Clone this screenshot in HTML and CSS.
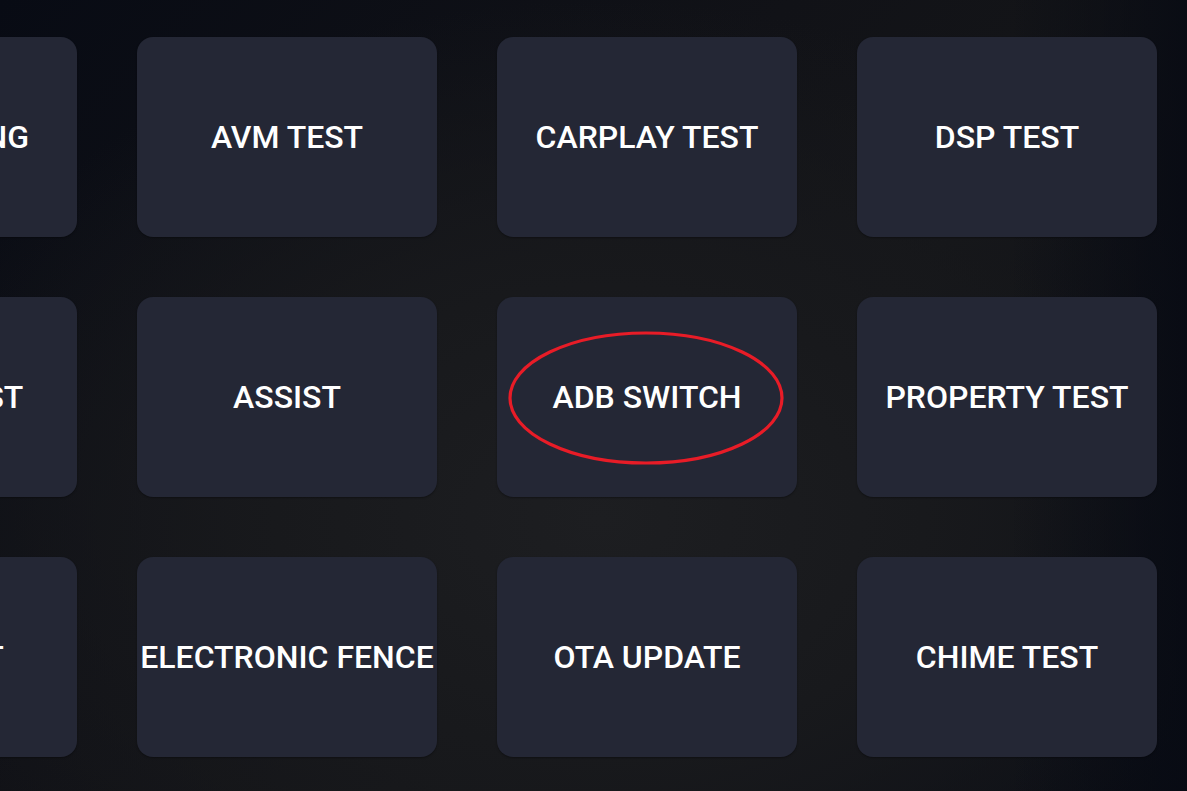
FILE: index.html
```html
<!DOCTYPE html>
<html lang="en">
<head>
<meta charset="utf-8">
<title>Test Menu</title>
<link rel="stylesheet" href="styles.css">
</head>
<body>
<main class="screen">
  <div class="grid">
    <button class="tile">ENGINEERING</button>
    <button class="tile">AVM TEST</button>
    <button class="tile">CARPLAY TEST</button>
    <button class="tile">DSP TEST</button>
    <button class="tile">POWER TEST</button>
    <button class="tile">ASSIST</button>
    <button class="tile tile-marked">ADB SWITCH
      <svg class="mark" viewBox="0 0 280 140" width="280" height="140" aria-hidden="true">
        <ellipse cx="139" cy="68" rx="136" ry="65" fill="none" stroke="#e81c27" stroke-width="3.2"/>
      </svg>
    </button>
    <button class="tile">PROPERTY TEST</button>
    <button class="tile">AMP TEST</button>
    <button class="tile">ELECTRONIC FENCE</button>
    <button class="tile">OTA UPDATE</button>
    <button class="tile">CHIME TEST</button>
  </div>
</main>
</body>
</html>
```
FILE: styles.css
```css
html, body {
  margin: 0;
  padding: 0;
  width: 1187px;
  height: 791px;
  overflow: hidden;
}
body {
  font-family: Roboto, "Noto Sans", "Liberation Sans", sans-serif;
  background:
    linear-gradient(90deg, rgba(7,10,19,0) 0%, rgba(7,10,19,0) 85%, rgba(7,10,19,0.8) 100%),
    radial-gradient(ellipse 720px 520px at 600px 520px, #1d1e21 0%, #18191c 45%, rgba(16,17,21,0) 100%),
    linear-gradient(135deg, #080b14 0%, #111217 40%, #141518 60%, #0e1016 80%, #0a0d15 100%);
  background-color: #101115;
}
.screen {
  width: 1187px;
  height: 791px;
  padding-top: 37px;
  box-sizing: border-box;
  overflow: hidden;
}
.grid {
  display: grid;
  grid-template-columns: repeat(4, 300px);
  grid-auto-rows: 200px;
  column-gap: 60px;
  row-gap: 60px;
  margin-left: -223px;
  width: max-content;
}
.tile {
  position: relative;
  display: flex;
  align-items: center;
  justify-content: center;
  border: none;
  margin: 0;
  padding: 0;
  background: #242735;
  border-radius: 16px;
  color: #ffffff;
  font-family: Roboto, "Noto Sans", "Liberation Sans", sans-serif;
  font-weight: 500;
  font-size: 32px;
  letter-spacing: 0;
  white-space: nowrap;
  overflow: visible;
  box-shadow: 0 1px 2px rgba(0,0,0,0.35);
}
.mark {
  position: absolute;
  left: 10px;
  top: 33px;
  pointer-events: none;
}
```
